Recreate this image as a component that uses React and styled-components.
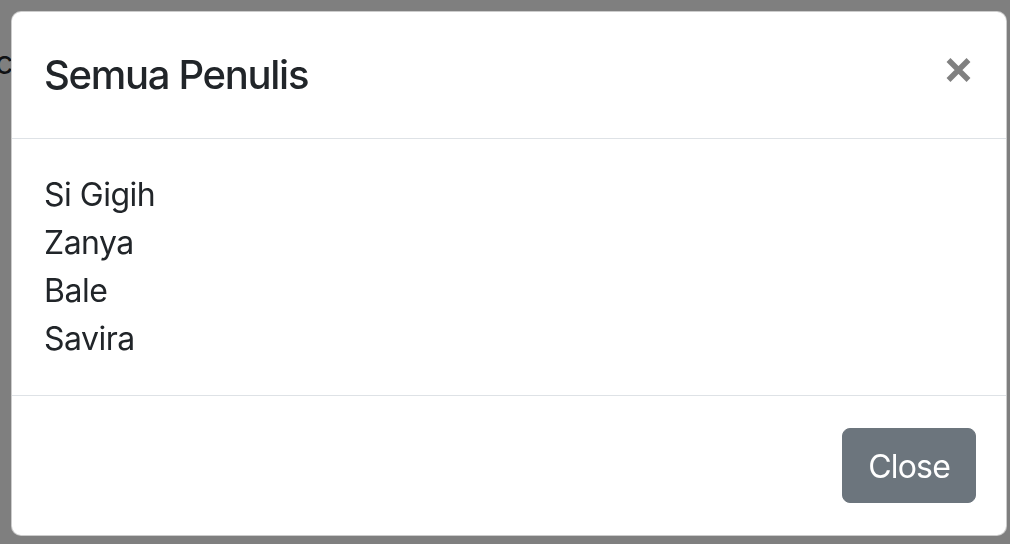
import React from "react";
import styled, { createGlobalStyle } from "styled-components";

const GlobalStyle = createGlobalStyle`
  html, body {
    margin: 0;
    padding: 0;
    width: 1010px;
    height: 544px;
    overflow: hidden;
    background: #fff;
  }
  body {
    font-family: Inter, "Liberation Sans", sans-serif;
    color: #212529;
  }
`;

const penulis = ["Si Gigih", "Zanya", "Bale", "Savira"];

export default function App() {
  return (
    <>
      <GlobalStyle />
      <Page>
        <PageText>c</PageText>
      </Page>
      <Backdrop />
      <ModalWrap>
        <Dialog>
          <Header>
            <Title>Semua Penulis</Title>
            <CloseX type="button" aria-label="Close">
              <svg width="25" height="24" viewBox="0 0 25 24">
                <path
                  d="M2.5 2 L22.5 22 M22.5 2 L2.5 22"
                  stroke="#808080"
                  strokeWidth="5.5"
                  fill="none"
                />
              </svg>
            </CloseX>
          </Header>
          <Body>
            {penulis.map((nama) => (
              <Line key={nama}>{nama}</Line>
            ))}
          </Body>
          <Footer>
            <Button type="button">Close</Button>
          </Footer>
        </Dialog>
      </ModalWrap>
    </>
  );
}

const Page = styled.div`
  height: 544px;
  padding-top: 39px;
  box-sizing: border-box;
`;

const PageText = styled.p`
  margin: 0 0 0 -5px;
  font-size: 32px;
  line-height: 1.5;
`;

const Backdrop = styled.div`
  position: fixed;
  inset: 0;
  background: rgba(0, 0, 0, 0.5);
`;

const ModalWrap = styled.div`
  position: fixed;
  inset: 0;
  padding: 11px 3px 0 11px;
`;

const Dialog = styled.div`
  display: flex;
  flex-direction: column;
  background: #fff;
  border: 1px solid rgba(0, 0, 0, 0.2);
  border-radius: 10px;
  width: 996px;
  box-sizing: border-box;
`;

const Header = styled.div`
  display: flex;
  align-items: flex-start;
  justify-content: space-between;
  padding: 32px;
  border-bottom: 1px solid #dee2e6;
`;

const Title = styled.h5`
  margin: 0;
  font-size: 40px;
  font-weight: 500;
  line-height: 62px;
  letter-spacing: -1.3px;
  color: #212529;
`;

const CloseX = styled.button`
  display: flex;
  align-items: center;
  justify-content: center;
  width: 48px;
  height: 48px;
  padding: 0;
  margin: 2px -8px 0 auto;
  border: 0;
  background: transparent;
  cursor: pointer;
`;

const Body = styled.div`
  padding: 32px;
`;

const Line = styled.div`
  font-size: 32px;
  line-height: 48px;
  letter-spacing: -0.5px;
`;

const Footer = styled.div`
  display: flex;
  justify-content: flex-end;
  padding: 24px;
  border-top: 1px solid #dee2e6;
`;

const Button = styled.button`
  margin: 8px 6px 8px;
  padding: 14px 25px 11px;
  font-family: Inter, "Liberation Sans", sans-serif;
  font-size: 32px;
  line-height: 48px;
  letter-spacing: -0.8px;
  color: #fff;
  background: #6c757d;
  border: 1px solid #6c757d;
  border-radius: 8px;
`;
